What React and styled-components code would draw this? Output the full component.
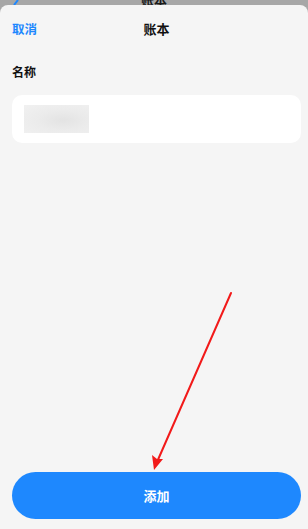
import React from "react";
import styled, { createGlobalStyle } from "styled-components";

const Global = createGlobalStyle`
  html, body { margin: 0; padding: 0; }
  body {
    background: #a7a7a7;
    font-family: "Noto Sans CJK SC", "Noto Sans", sans-serif;
  }
  * { box-sizing: border-box; }
`;

const Page = styled.div`
  position: relative;
  width: 308px;
  height: 529px;
  display: flex;
  flex-direction: column;
  overflow: hidden;
  background: #a7a7a7;
`;

const Behind = styled.div`
  height: 5px;
  flex: none;
  overflow: hidden;
  display: flex;
  align-items: flex-end;
  padding: 0 12px;
  position: relative;
`;

const BehindTitle = styled.span`
  position: absolute;
  left: 0;
  right: 0;
  bottom: -1px;
  text-align: center;
  font-size: 13px;
  font-weight: 700;
  line-height: 13px;
  color: #1a1a1a;
`;

const Sheet = styled.div`
  flex: 1;
  background: #f5f5f5;
  border-radius: 8px 8px 0 0;
  display: flex;
  flex-direction: column;
  padding: 0 7px 10px 12px;
`;

const Header = styled.div`
  height: 46px;
  display: flex;
  align-items: center;
  position: relative;
`;

const Cancel = styled.span`
  font-size: 12.5px;
  font-weight: 700;
  color: #1e88fe;
`;

const Title = styled.span`
  position: absolute;
  left: 0;
  right: 0;
  text-align: center;
  font-size: 13px;
  font-weight: 700;
  color: #111;
  pointer-events: none;
`;

const Label = styled.div`
  margin-top: 13px;
  font-size: 12px;
  font-weight: 700;
  color: #111;
  line-height: 16px;
`;

const Card = styled.div`
  margin-top: 15px;
  height: 48px;
  background: #ffffff;
  border-radius: 10px;
  display: flex;
  align-items: center;
  padding-left: 12px;
`;

const Blur = styled.div`
  width: 65px;
  height: 28px;
  background: radial-gradient(ellipse at 60% 55%, #e3e3e3 0%, #ebebeb 45%, #f1f1f1 100%);
`;

const Spacer = styled.div`
  flex: 1;
`;

const AddButton = styled.button`
  height: 47px;
  border: none;
  border-radius: 24px;
  background: #1e88fe;
  color: #fff;
  font-family: inherit;
  font-size: 13px;
  font-weight: 700;
  display: flex;
  align-items: center;
  justify-content: center;
  padding: 0;
`;

const Overlay = styled.svg`
  position: absolute;
  left: 0;
  top: 0;
  pointer-events: none;
`;

export default function App() {
  return (
    <>
      <Global />
      <Page>
        <Behind>
          <svg width="8" height="5" viewBox="0 0 8 5" style={{ marginLeft: 1 }}>
            <path d="M1 5 L5 0" stroke="#1e88fe" strokeWidth="2" fill="none" />
          </svg>
          <BehindTitle>账本</BehindTitle>
        </Behind>
        <Sheet>
          <Header>
            <Cancel>取消</Cancel>
            <Title>账本</Title>
          </Header>
          <Label>名称</Label>
          <Card>
            <Blur />
          </Card>
          <Spacer />
          <AddButton>添加</AddButton>
        </Sheet>
        <Overlay width="308" height="529" viewBox="0 0 308 529">
          <line x1="231" y1="293" x2="157" y2="462" stroke="#f21a1a" strokeWidth="2" strokeLinecap="round" />
          <polygon points="154,470 152,455 157,459 163,459" fill="#f21a1a" />
        </Overlay>
      </Page>
    </>
  );
}
